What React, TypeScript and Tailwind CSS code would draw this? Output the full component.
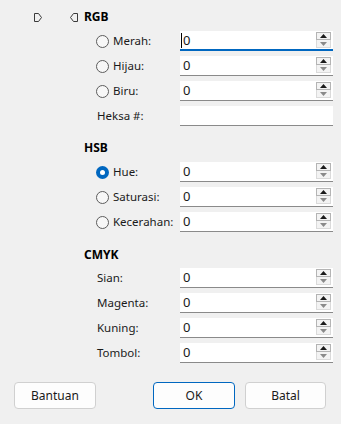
import React from "react";

const font = { fontFamily: '"Noto Sans", "Open Sans", sans-serif' };

function Marker({ flip }: { flip?: boolean }) {
  return (
    <svg width="8" height="9" viewBox="0 0 8 9" className={flip ? "-scale-x-100" : ""}>
      <path d="M0.5 0.5 H4.5 L7.5 4.5 L4.5 8.5 H0.5 Z" fill="none" stroke="#3a3a3a" strokeWidth="1" />
    </svg>
  );
}

function Spinner() {
  return (
    <div className="mr-[2px] mt-[1px] flex w-[15px] flex-col">
      <div className="flex h-[8px] items-center justify-center border border-[#b4b4b4] bg-[#f3f3f3]">
        <svg width="7" height="4" viewBox="0 0 7 4">
          <path d="M0 4 L3.5 0 L7 4 Z" fill="#1a1a1a" />
        </svg>
      </div>
      <div className="flex h-[8px] items-center justify-center border border-t-0 border-[#dadada] bg-[#f3f3f3]">
        <svg width="7" height="4" viewBox="0 0 7 4">
          <path d="M0 0 L7 0 L3.5 4 Z" fill="#8a8a8a" />
        </svg>
      </div>
    </div>
  );
}

function Field({ value, spin = true, focused }: { value: string; spin?: boolean; focused?: boolean }) {
  return (
    <div
      className={
        "flex h-[20px] w-[153px] items-start bg-white " +
        (focused ? "border-b-2 border-[#0067c0]" : "border-b border-[#8a8a8a]")
      }
    >
      <div className="relative flex-1 pl-[3px] text-[13px] leading-[19px] text-[#1a1a1a]">
        {focused && <div className="absolute left-[1px] top-[2px] h-[15px] w-px bg-black" />}
        {value}
      </div>
      {spin && <Spinner />}
    </div>
  );
}

function Radio({ checked }: { checked?: boolean }) {
  if (checked)
    return (
      <div className="flex h-[13px] w-[13px] items-center justify-center rounded-full bg-[#0067c0]">
        <div className="h-[5px] w-[5px] rounded-full bg-white" />
      </div>
    );
  return <div className="h-[13px] w-[13px] rounded-full border border-[#5c5c5c] bg-[#f7f7f7]" />;
}

function Row({
  label,
  radio,
  checked,
  value = "0",
  spin = true,
  focused,
}: {
  label: string;
  radio?: boolean;
  checked?: boolean;
  value?: string;
  spin?: boolean;
  focused?: boolean;
}) {
  return (
    <div className="flex h-[20px] items-center">
      <div className="flex w-[96px] items-center pl-[12px]">
        {radio && <Radio checked={checked} />}
        <span className={(radio ? "ml-[4px] " : "ml-px ") + "text-[11.5px] text-[#1a1a1a]"}>{label}</span>
      </div>
      <Field value={value} spin={spin} focused={focused} />
    </div>
  );
}

function Heading({ children }: { children: string }) {
  return <div className="flex h-[16px] items-center text-[12px] font-bold text-black">{children}</div>;
}

function Button({ children, primary, className }: { children: string; primary?: boolean; className?: string }) {
  return (
    <div
      className={
        "flex h-[27px] items-center justify-center rounded-[4px] border bg-[#fdfdfd] text-[12px] text-[#1a1a1a] " +
        (primary ? "border-[#0067c0] " : "border-[#d0d0d0] ") +
        (className ?? "")
      }
    >
      {children}
    </div>
  );
}

export default function App() {
  return (
    <div className="h-[424px] w-[341px] overflow-hidden bg-[#f0f0f0] pt-[9px]" style={font}>
      <div className="flex h-[16px] items-center pl-[34px]">
        <Marker />
        <div className="ml-[28px]">
          <Marker flip />
        </div>
        <div className="ml-[6px]">
          <Heading>RGB</Heading>
        </div>
      </div>
      <div className="pl-[84px]">
        <div className="mt-[6px] flex flex-col gap-[5px]">
          <Row label="Merah:" radio focused />
          <Row label="Hijau:" radio />
          <Row label="Biru:" radio />
          <Row label="Heksa #:" value="" spin={false} />
        </div>
        <div className="mt-[14px]">
          <Heading>HSB</Heading>
        </div>
        <div className="mt-[6px] flex flex-col gap-[5px]">
          <Row label="Hue:" radio checked />
          <Row label="Saturasi:" radio />
          <Row label="Kecerahan:" radio />
        </div>
        <div className="mt-[15px]">
          <Heading>CMYK</Heading>
        </div>
        <div className="mt-[5px] flex flex-col gap-[5px]">
          <Row label="Sian:" />
          <Row label="Magenta:" />
          <Row label="Kuning:" />
          <Row label="Tombol:" />
        </div>
      </div>
      <div className="mt-[19px] flex pl-[14px]">
        <Button className="w-[82px]">Bantuan</Button>
        <Button primary className="ml-[57px] w-[82px]">
          OK
        </Button>
        <Button className="ml-[10px] w-[81px]">Batal</Button>
      </div>
    </div>
  );
}
